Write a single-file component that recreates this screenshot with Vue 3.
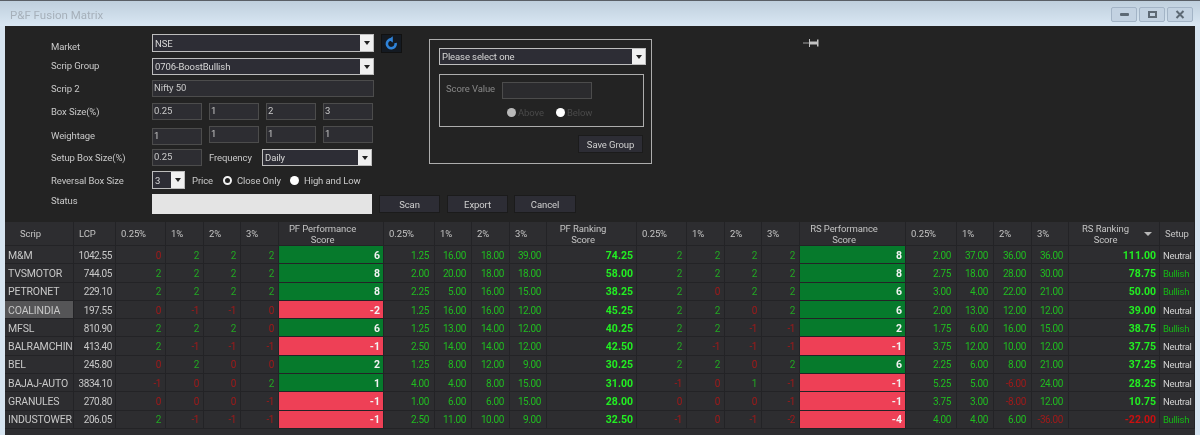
<script setup>
const head = [
  { t: 'Scrip', c: 'hc' }, { t: 'LCP' },
  { t: '0.25%' }, { t: '1%' }, { t: '2%' }, { t: '3%' },
  { t: ['PF Performance', 'Score'], c: 'hc' },
  { t: '0.25%' }, { t: '1%' }, { t: '2%' }, { t: '3%' },
  { t: ['PF Ranking', 'Score'], c: 'hc' },
  { t: '0.25%' }, { t: '1%' }, { t: '2%' }, { t: '3%' },
  { t: ['RS Performance', 'Score'], c: 'hc' },
  { t: '0.25%' }, { t: '1%' }, { t: '2%' }, { t: '3%' },
  { t: ['RS Ranking', 'Score'], c: 'hc', sort: true },
  { t: 'Setup' }
]
const widths = [69, 42, 50, 38, 37, 38, 105, 51, 37, 38, 37, 90, 50, 38, 37, 38, 106, 51, 37, 38, 37, 91, 35]
const rows = [
  ['M&M','1042.55',[0,2,2,2],6,['1.25','16.00','18.00','39.00'],'74.25',[2,2,2,2],8,['2.00','37.00','36.00','36.00'],'111.00','Neutral'],
  ['TVSMOTOR','744.05',[2,2,2,2],8,['2.00','20.00','18.00','18.00'],'58.00',[2,2,2,2],8,['2.75','18.00','28.00','30.00'],'78.75','Bullish'],
  ['PETRONET','229.10',[2,2,2,2],8,['2.25','5.00','16.00','15.00'],'38.25',[2,0,2,2],6,['3.00','4.00','22.00','21.00'],'50.00','Bullish'],
  ['COALINDIA','197.55',[0,-1,-1,0],-2,['1.25','16.00','16.00','12.00'],'45.25',[2,2,0,2],6,['2.00','13.00','12.00','12.00'],'39.00','Neutral'],
  ['MFSL','810.90',[2,2,2,0],6,['1.25','13.00','14.00','12.00'],'40.25',[2,2,-1,-1],2,['1.75','6.00','16.00','15.00'],'38.75','Bullish'],
  ['BALRAMCHIN','413.40',[2,-1,-1,-1],-1,['2.50','14.00','14.00','12.00'],'42.50',[2,-1,-1,-1],-1,['3.75','12.00','10.00','12.00'],'37.75','Neutral'],
  ['BEL','245.80',[0,2,0,0],2,['1.25','8.00','12.00','9.00'],'30.25',[2,2,0,2],6,['2.25','6.00','8.00','21.00'],'37.25','Neutral'],
  ['BAJAJ-AUTO','3834.10',[-1,0,0,2],1,['4.00','4.00','8.00','15.00'],'31.00',[-1,0,1,-1],-1,['5.25','5.00','-6.00','24.00'],'28.25','Neutral'],
  ['GRANULES','270.80',[0,0,0,-1],-1,['1.00','6.00','6.00','15.00'],'28.00',[0,0,0,-1],-1,['3.75','3.00','-8.00','12.00'],'10.75','Neutral'],
  ['INDUSTOWER','206.05',[2,-1,-1,-1],-1,['2.50','11.00','10.00','9.00'],'32.50',[-1,0,-1,-2],-4,['4.00','4.00','6.00','-36.00'],'-22.00','Bullish']
]
const sign = v => (Number(v) > 0 ? 'pos' : 'neg')
</script>

<template>
  <div class="window">
    <div class="titlebar">
      <span class="title">P&amp;F Fusion Matrix</span>
      <div class="controls">
        <span class="ctl ctl-min"><i></i></span>
        <span class="ctl ctl-max"><i></i></span>
        <span class="ctl ctl-close">
          <svg width="10" height="9" viewBox="0 0 10 9"><path d="M1.5 1l7 7M8.5 1l-7 7" stroke="#5d6974" stroke-width="2" fill="none"/></svg>
        </span>
      </div>
    </div>
    <div class="body">
      <div class="top">
        <div class="fields">
          <div class="row r-market">
            <label>Market</label>
            <div class="select wide"><span>NSE</span><b class="arrow"></b></div>
            <button class="refresh">
              <svg width="13" height="14" viewBox="0 0 13 14"><path d="M6.2 3.4A4.4 4.4 0 1 0 10.6 7" stroke="#2f83d8" stroke-width="2.6" fill="none"/><path d="M7.8 0.2v6.4L3.6 3.4z" fill="#2f83d8"/></svg>
            </button>
          </div>
          <div class="row r-group">
            <label>Scrip Group</label>
            <div class="select wide"><span>0706-BoostBullish</span><b class="arrow"></b></div>
          </div>
          <div class="row r-scrip">
            <label>Scrip 2</label>
            <div class="input wide">Nifty 50</div>
          </div>
          <div class="row r-box">
            <label>Box Size(%)</label>
            <div class="inputs">
              <div class="input num">0.25</div><div class="input num">1</div><div class="input num">2</div><div class="input num">3</div>
            </div>
          </div>
          <div class="row r-weight">
            <label>Weightage</label>
            <div class="inputs">
              <div class="input num low">1</div><div class="input num">1</div><div class="input num">1</div><div class="input num">1</div>
            </div>
          </div>
          <div class="row r-setup">
            <label>Setup Box Size(%)</label>
            <div class="input num">0.25</div>
            <span class="freq">Frequency</span>
            <div class="select daily"><span>Daily</span><b class="arrow"></b></div>
          </div>
          <div class="row r-rev">
            <label>Reversal Box Size</label>
            <div class="select small"><span>3</span><b class="arrow"></b></div>
            <span class="price">Price</span>
            <span class="radio on"></span><span class="rlabel first">Close Only</span>
            <span class="radio"></span><span class="rlabel">High and Low</span>
          </div>
        </div>
        <div class="panel">
          <div class="select panel-select"><span>Please select one</span><b class="arrow"></b></div>
          <div class="inner">
            <div class="score">
              <span>Score Value</span>
              <div class="input score-input"></div>
            </div>
            <div class="choices">
              <span class="radio dis"></span><span class="dim above">Above</span>
              <span class="radio"></span><span class="dim">Below</span>
            </div>
          </div>
          <div class="save"><button class="btn save-btn">Save Group</button></div>
        </div>
        <svg class="pin" width="17" height="10" viewBox="0 0 17 10">
          <path d="M0 5h6" stroke="#a0a0a0" stroke-width="1"/>
          <path d="M6 1h1v2.5h7V1.5h1.500v7H14V6.500H7V9H6z" fill="#c2c2c2"/>
        </svg>
      </div>
      <div class="row r-status">
        <label>Status</label>
        <div class="status"></div>
        <button class="btn scan">Scan</button>
        <button class="btn export">Export</button>
        <button class="btn cancel">Cancel</button>
      </div>
      <table class="grid">
        <colgroup><col v-for="(w, i) in widths" :key="i" :style="{ width: w + 'px' }"></colgroup>
        <thead>
          <tr>
            <th v-for="(h, i) in head" :key="i" :class="h.c">
              <template v-if="Array.isArray(h.t)">{{ h.t[0] }}<br>{{ h.t[1] }}</template>
              <template v-else>{{ h.t }}</template>
              <b v-if="h.sort" class="sort"></b>
            </th>
          </tr>
        </thead>
        <tbody>
          <tr v-for="r in rows" :key="r[0]">
            <td class="scrip" :class="{ sel: r[0] === 'COALINDIA' }">{{ r[0] }}</td>
            <td class="lcp">{{ r[1] }}</td>
            <td v-for="(v, i) in r[2]" :key="'a' + i" class="int" :class="sign(v)">{{ v }}</td>
            <td class="score-cell" :class="sign(r[3])">{{ r[3] }}</td>
            <td v-for="(v, i) in r[4]" :key="'b' + i" class="dec" :class="sign(v)">{{ v }}</td>
            <td class="rank" :class="sign(r[5])">{{ r[5] }}</td>
            <td v-for="(v, i) in r[6]" :key="'c' + i" class="int" :class="sign(v)">{{ v }}</td>
            <td class="score-cell" :class="sign(r[7])">{{ r[7] }}</td>
            <td v-for="(v, i) in r[8]" :key="'d' + i" class="dec" :class="sign(v)">{{ v }}</td>
            <td class="rank" :class="sign(r[9])">{{ r[9] }}</td>
            <td class="setup" :class="r[10]">{{ r[10] }}</td>
          </tr>
        </tbody>
      </table>
      <div class="tail"></div>
    </div>
  </div>
</template>

<style>
html, body { margin: 0; background: #d5e3ef; overflow: hidden; }
</style>

<style scoped>
.window {
  width: 1200px; height: 435px; box-sizing: border-box; overflow: hidden;
  display: flex; flex-direction: column;
  border-top: 1px solid #5a5f66;
  padding: 0 5px;
  background: #d6e4f0;
  font: 9.5px Roboto, "Noto Sans", sans-serif;
  letter-spacing: -0.1px;
  color: #c9c9c9;
  filter: blur(0.4px);
  white-space: nowrap;
}
.titlebar {
  height: 25px; margin: 0 -5px; padding: 2px 7px 0 10px; box-sizing: border-box;
  display: flex; align-items: center; justify-content: space-between;
  background: linear-gradient(#bfcfdd, #d9e7f3);
}
.title { color: #a6b0ba; font-size: 11.5px; letter-spacing: 0; }
.controls { display: flex; gap: 2px; }
.ctl {
  width: 26px; height: 15px; box-sizing: border-box; display: flex; align-items: center; justify-content: center;
  border: 1px solid #a3b4c6; border-radius: 2px; background: #c3d2e1;
}
.ctl-min i { width: 9px; height: 3px; background: #5d6974; border-radius: 1px; }
.ctl-max i { width: 9px; height: 7px; box-sizing: border-box; border: 2px solid #5d6974; }
.body { flex: 1; background: #232323; display: flex; flex-direction: column; min-height: 0; }
.top { display: flex; height: 162px; }
.fields { width: 424px; box-sizing: border-box; padding: 8px 0 0 46px; }
.row { display: flex; align-items: center; }
label { width: 101px; flex: none; }
.r-market label { margin-top: 6px; }
.r-group label { margin-bottom: 3px; }
.r-status label { margin-bottom: 8px; }
.select {
  height: 18px; box-sizing: border-box; display: flex; align-items: center; justify-content: space-between;
  border: 1px solid #bdbdbd; background: #2d2d35; color: #d6d6d6; padding-left: 2px;
}
.wide { width: 222px; }
.arrow { align-self: stretch; width: 13px; background: #f0f0f0; position: relative; flex: none; }
.arrow::after {
  content: ""; position: absolute; left: 4px; top: 6px;
  border: 3px solid transparent; border-top: 4px solid #222; border-bottom: 0;
}
.input {
  height: 17px; box-sizing: border-box; border: 1px solid #4c4c4c; background: #2d2d32;
  color: #c9c9c9; padding-left: 1px; line-height: 13px;
}
.num { width: 50px; }
.inputs { display: flex; gap: 7px; align-items: flex-start; }
.r-market { height: 18px; }
.r-group { margin-top: 6px; }
.r-group .select { height: 17px; }
.refresh {
  width: 21px; height: 19px; margin-left: 7px; padding: 0; display: flex; align-items: center; justify-content: center;
  background: #141a22; border: 1px solid #111;
}
.r-scrip { margin-top: 5px; }
.r-box { margin-top: 6px; }
.r-weight { margin-top: 6px; height: 19px; }
.low { margin-top: 2px; }
.r-setup { margin-top: 4px; }
.freq { margin-left: 7px; width: 53px; }
.daily { width: 110px; height: 17px; }
.r-rev { margin-top: 5px; height: 18px; }
.small { width: 33px; }
.price { margin-left: 7px; width: 31px; }
.radio { width: 9px; height: 9px; border-radius: 50%; background: #fff; flex: none; margin-right: 5px; box-sizing: border-box; }
.radio.on { border: 2.5px solid #f2f2f2; background: #222; }
.radio.dis { background: #b9b9b9; }
.rlabel.first { width: 42px; margin-right: 11px; }
.panel {
  width: 223px; height: 125px; box-sizing: border-box; margin-top: 13px;
  border: 1px solid #adadad; padding: 8px 6px 0 9px;
}
.panel-select { width: 207px; height: 17px; }
.inner {
  width: 205px; height: 53px; box-sizing: border-box; margin-top: 9px;
  border: 1px solid #adadad; padding: 7px 0 0 6px; color: #888;
}
.score { display: flex; align-items: flex-start; }
.score span { width: 56px; margin-top: 1px; }
.score-input { width: 90px; background: #2b2b2e; }
.choices { display: flex; align-items: center; margin: 8px 0 0 61px; color: #4a4a4a; }
.choices .radio { margin-right: 2px; }
.dim.above { margin-right: 6px; }
.dim { width: 32px; }
.save { display: flex; justify-content: flex-end; margin-top: 8px; padding-right: 2px; }
.btn {
  height: 18px; box-sizing: border-box; border: 1px solid #1b1b1b; background: #2d2d35; color: #d0d0d0;
  font: inherit; letter-spacing: inherit; padding: 0;
}
.save-btn { width: 65px; }
.pin { margin: 12px 0 0 151px; }
.r-status { padding-left: 46px; height: 20px; margin-top: 6px; }
.status { width: 220px; height: 20px; background: #e4e4e4; }
.scan { width: 61px; margin-left: 7px; }
.export { width: 61px; margin-left: 7px; }
.cancel { width: 62px; margin-left: 6px; }
.grid {
  table-layout: fixed; width: 1190px; border-collapse: separate; border-spacing: 0;
  margin-top: 8px; background: #2d2d30;
}
th {
  height: 24px; padding: 0 0 0 5px; font-weight: 400; text-align: left; color: #c4c4c4;
  font-size: 9.5px; line-height: 11px; border-right: 1px solid #232326; border-bottom: 1px solid #232326; box-sizing: border-box;
  position: relative;
}
th.hc { text-align: center; padding: 0 17px 0 0; }
.sort {
  position: absolute; right: 7px; top: 10px;
  border: 4px solid transparent; border-top: 4px solid #b8b8b8; border-bottom: 0;
}
td {
  height: 18.3px; padding: 1px 4px 0 0; box-sizing: border-box; text-align: right; line-height: 15px;
  border-right: 1px solid #232326; border-bottom: 1px solid #232326; font-size: 10px; letter-spacing: -0.4px; overflow: hidden;
}
.dec { padding-right: 5px; }
.scrip { text-align: left; padding-left: 3px; color: #c8c8c8; font-size: 10.5px; letter-spacing: -0.15px; }
.scrip.sel { background: #555557; }
.lcp { color: #c8c8c8; padding-right: 3px; }
.int.pos { color: #22a822; }
.dec.pos { color: #20bc20; }
.int.neg, .dec.neg { color: #a01a1a; }
.score-cell { font-weight: 700; color: #f2f2f2; font-size: 10.5px; letter-spacing: 0; padding-right: 3px; }
.score-cell.pos { background: #067a2c; }
.score-cell.neg { background: #ee4056; }
.rank { font-weight: 700; font-size: 10.5px; letter-spacing: 0; padding-right: 3px; }
.rank.pos { color: #22ee22; }
.rank.neg { color: #c91010; }
.setup { padding-right: 0; text-align: left; padding-left: 3px; font-size: 9.5px; letter-spacing: -0.3px; }
.setup.Neutral { color: #d2d2d2; }
.setup.Bullish { color: #16b816; }
.tail { flex: 1; background: #2d2d30; }
</style>
